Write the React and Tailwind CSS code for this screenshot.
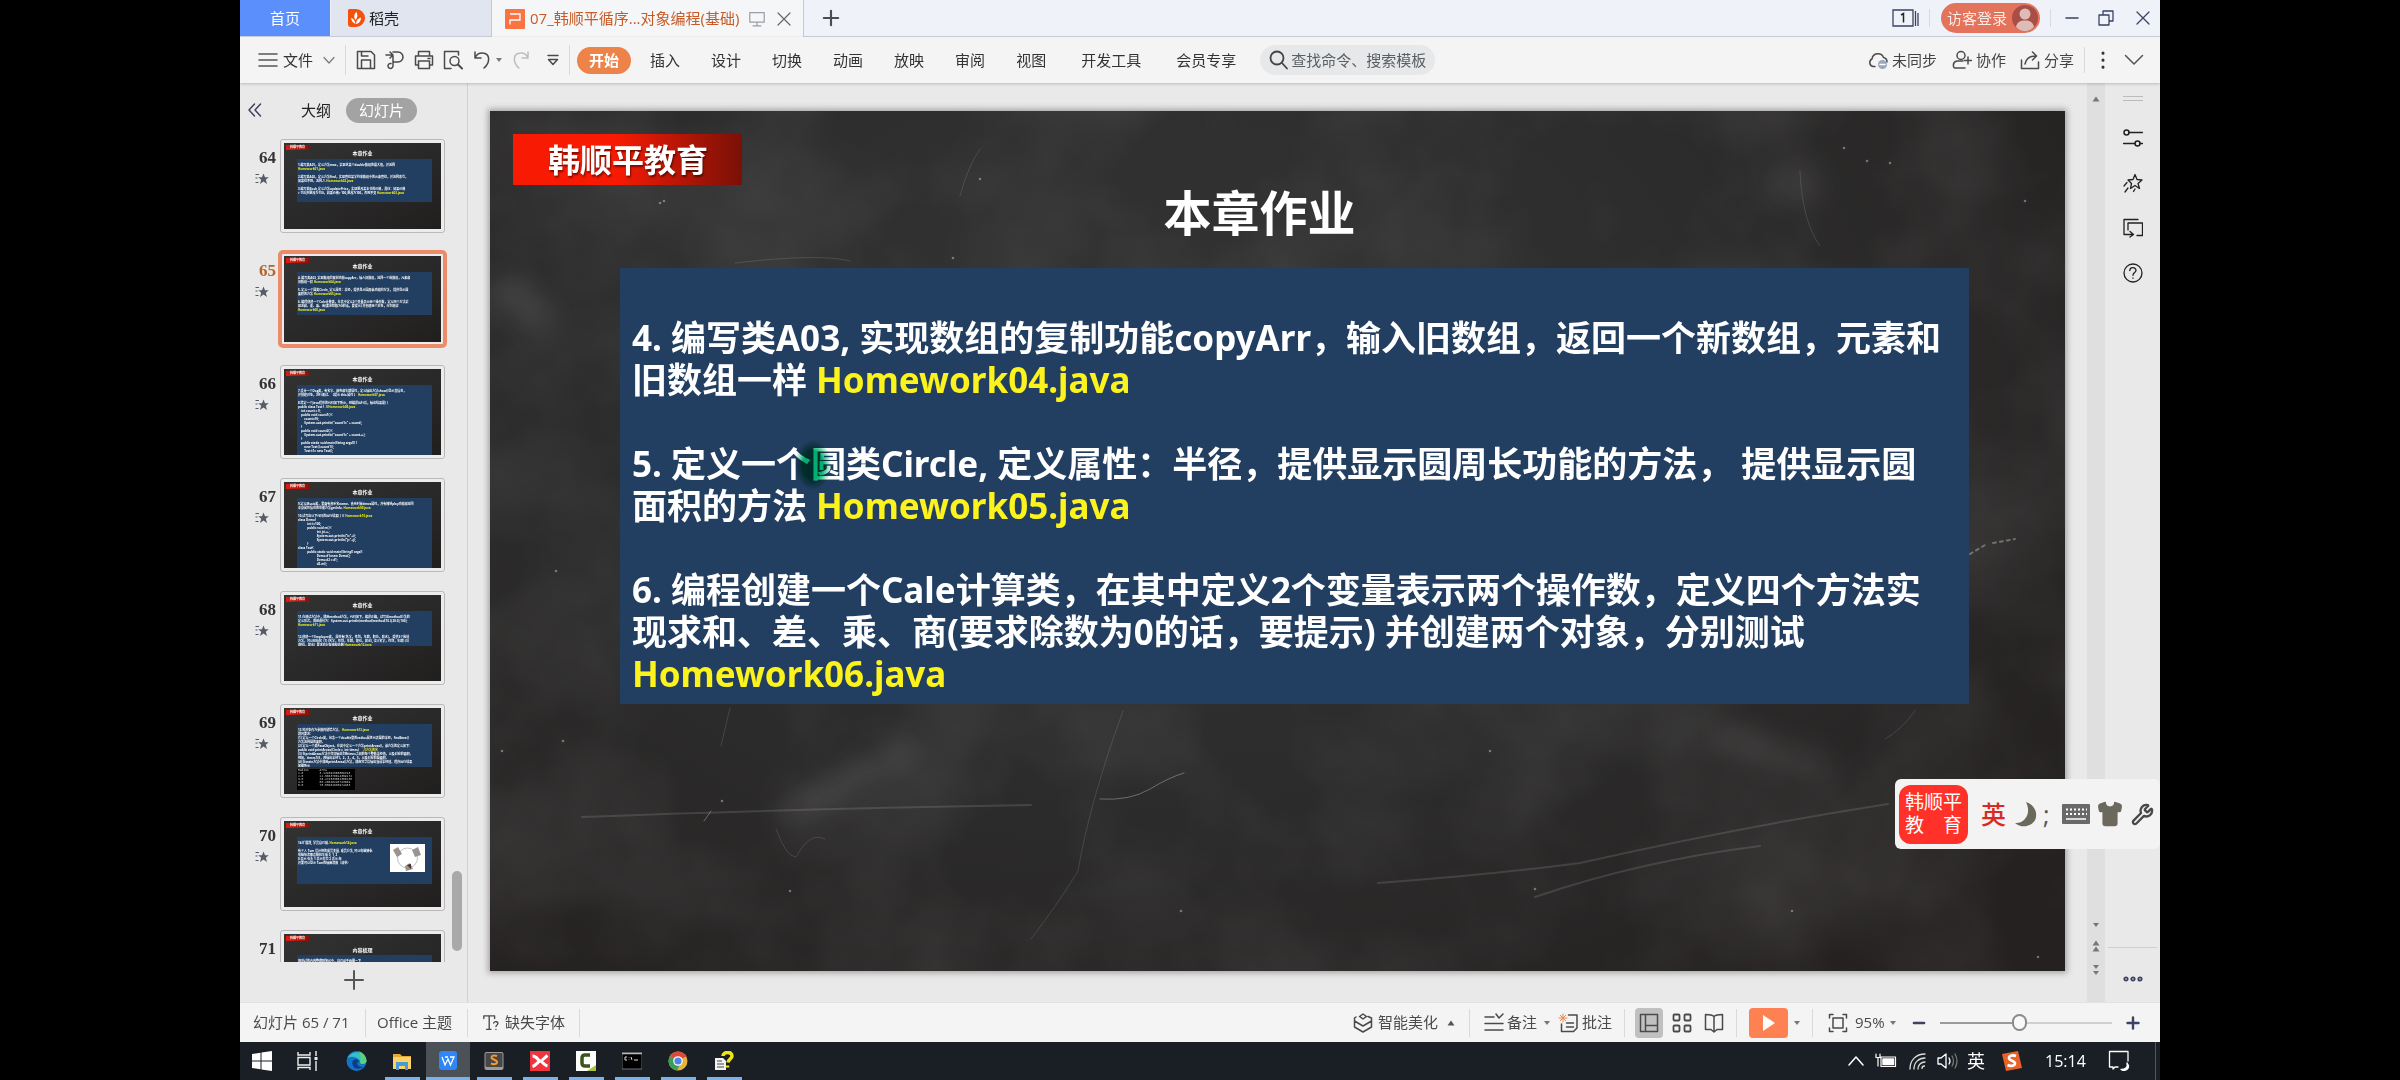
import React from "react";
import { Wrench, Shirt } from "lucide-react";

function Ico({ w = 20, h = 20, box = "0 0 20 20", sw = 1.5, className = "text-[#4a4a4a]", children }) {
  return (
    <svg width={w} height={h} viewBox={box} fill="none" stroke="currentColor" strokeWidth={sw} strokeLinecap="round" strokeLinejoin="round" className={"shrink-0 " + className} aria-hidden="true">
      {children}
    </svg>
  );
}

function Caret({ up, className = "text-[#777]" }) {
  return (
    <svg width="8" height="6" viewBox="0 0 8 6" className={"shrink-0 " + className} aria-hidden="true">
      <path d={up ? "M4 0.5L7.5 5.5H0.5Z" : "M4 5L7 1H1Z"} fill="currentColor" />
    </svg>
  );
}

function Sep({ className = "" }) {
  return <span className={"w-px shrink-0 bg-[#dadada] " + className} />;
}

function TitleBar() {
  return (
    <header className="flex h-[37px] shrink-0 items-stretch border-b border-[#ced1de] bg-[#eff3f9] text-[15px]">
      <button className="w-[90px] shrink-0 bg-[#5a8ffc] text-white">首页</button>
      <button className="ml-px flex w-[160px] shrink-0 items-center bg-[#e0e5ef] pl-[16px] text-[#222]">
        <svg width="18" height="20" viewBox="0 0 18 20" aria-hidden="true">
          <path d="M2 1H9A9 9 0 0 1 9 19H4A3 3 0 0 1 1 16V2Z" fill="#f4510b" />
          <path d="M8.500 16C6 15 4.500 13 4 10C6 10.500 8 12 8.500 16ZM8.500 12C6.500 9 7 6 9.500 4C11 7 10.500 10 8.500 12ZM9 16C9 12.500 11 10.500 14 9.500C14 13 12 15.500 9 16Z" fill="#fff" />
        </svg>
        <span className="ml-1">稻壳</span>
      </button>
      <div className="-mb-px flex w-[313px] shrink-0 items-center border-x border-[#c3c8da] bg-[#f5f6f8] pl-[13px] text-[#c75b27]">
        <svg width="20" height="20" viewBox="0 0 20 20" className="shrink-0" aria-hidden="true">
          <rect width="20" height="20" rx="1" fill="#fb7341" />
          <path d="M5 15.500V11H15V5H5" fill="none" stroke="#fff" strokeWidth="1.300" />
        </svg>
        <span className="ml-[5px] whitespace-nowrap">07_韩顺平循序...对象编程(基础)</span>
        <Ico w={16} h={16} className="ml-auto text-[#9a9da5]">
          <path d="M1 2H19V14H1ZM10 14V18M5 18.500H15" />
        </Ico>
        <button aria-label="关闭标签" className="mr-[12px] ml-[12px]">
          <Ico w={14} h={14} box="0 0 14 14" sw={1.2} className="text-[#666]"><path d="M1 1L13 13M13 1L1 13" /></Ico>
        </button>
      </div>
      <button aria-label="新建标签" className="ml-[18px]">
        <Ico w={18} h={18} sw={2.4} className="text-[#4a4d55]"><path d="M10 2V18M2 10H18" /></Ico>
      </button>
      <div className="ml-auto flex items-center pr-[10px] text-[#3b4263]">
        <svg width="27" height="18" viewBox="0 0 27 18" className="mr-[10px]" fill="none" stroke="#3b4263" strokeWidth="1.300" aria-hidden="true">
          <path d="M1 1H21V17H1Z M23.500 2V17M26 4V17" />
          <path d="M9 6L11.500 4.500V13.500" stroke="#222" strokeWidth="1.500" />
        </svg>
        <Sep className="h-[18px]" />
        <button className="ml-[11px] flex h-[30px] items-center gap-[5px] rounded-full bg-[#e3735a] pr-[2px] pl-[6px] text-[#fbeae6]">
          访客登录
          <svg width="26" height="26" viewBox="0 0 26 26" aria-hidden="true">
            <circle cx="13" cy="13" r="13" fill="#a84e46" />
            <circle cx="13" cy="9" r="5.500" fill="#ddbcb7" />
            <path d="M4 22C5 17 8 15.500 13 15.500S21 17 22 22C17 27.500 9 27.500 4 22Z" fill="#ddbcb7" />
          </svg>
        </button>
        <Sep className="ml-[10px] h-[18px]" />
        <button aria-label="最小化" className="ml-[14px]"><Ico w={14} h={14} box="0 0 14 14" className="text-[#3b4263]"><path d="M1 7H13" /></Ico></button>
        <button aria-label="还原" className="ml-[19px]"><Ico w={16} h={16} box="0 0 16 16" sw={1.3} className="text-[#3b4263]"><path d="M1 5H11V15H1ZM5 5V1H15V11H11" /></Ico></button>
        <button aria-label="关闭" className="ml-[22px]"><Ico w={14} h={14} box="0 0 14 14" sw={1.3} className="text-[#3b4263]"><path d="M1 1L13 13M13 1L1 13" /></Ico></button>
      </div>
    </header>
  );
}

function Ribbon() {
  return (
    <nav className="relative z-10 flex h-[46px] shrink-0 items-center bg-[#f4f4f4] pl-[18px] text-[15px] whitespace-nowrap text-[#333] shadow-[0_1px_3px_rgba(0,0,0,0.2)]">
      <button className="flex items-center">
        <Ico className="text-[#555]"><path d="M1 4H19M1 10H19M1 16H19" /></Ico>
        <span className="ml-[5px]">文件</span>
        <Ico w={12} h={12} box="0 0 12 12" sw={1.2} className="ml-[10px] text-[#777]"><path d="M1 3.500L6 9L11 3.500" /></Ico>
      </button>
      <Sep className="ml-[10px] h-[30px]" />
      <div className="ml-[10px] flex items-center gap-[9px]">
        <button aria-label="保存"><Ico><path d="M1.500 1.500H15L18.500 5V18.500H1.500ZM5.500 18V10H14.500V18M5.500 2V6H12" /></Ico></button>
        <button aria-label="输出为PDF"><Ico><path d="M1 5H8M5 2L8 5L5 8M8 2H13A5 5 0 0 1 13 12H8V16A2.500 2.500 0 1 1 6 13.500M8 12V6" /></Ico></button>
        <button aria-label="打印"><Ico><path d="M4.500 6V1.500H15.500V6M4.500 15H1.500V6H18.500V15H15.500M4.500 11H15.500V18.500H4.500ZM14 8.500H16" /></Ico></button>
        <button aria-label="打印预览"><Ico><path d="M8 18.500H1.500V1.500H15.500V5" /><circle cx="11.500" cy="11" r="4.500" /><path d="M15 14.500L19 18.500" strokeWidth="2" /></Ico></button>
        <button aria-label="撤销"><Ico><path d="M3 2V8H9M3 8C5 3.500 9 2.500 13 3.500C18 5.500 18 13 12 18" /></Ico></button>
      </div>
      <button aria-label="撤销列表" className="ml-[3px]"><Caret /></button>
      <button aria-label="恢复" className="ml-[8px]"><Ico className="text-[#bdbdbd]"><path d="M17 2V8H11M17 8C15 3.500 11 2.500 7 3.500C2 5.500 2 13 8 18" /></Ico></button>
      <button aria-label="自定义" className="ml-[15px]"><Ico w={14} h={12} box="0 0 14 12"><path d="M2 1.500H12M2.500 5.500H11.500L7 10.500Z" /></Ico></button>
      <Sep className="ml-[9px] h-[30px]" />
      <button className="ml-[7px] h-[27px] rounded-full bg-[#ed8348] px-3 font-bold text-white">开始</button>
      <div className="ml-[19px] flex gap-[31px]">
        {["插入", "设计", "切换", "动画", "放映", "审阅", "视图"].map((t) => <button key={t}>{t}</button>)}
      </div>
      <div className="ml-[35px] flex gap-[35px]">
        {["开发工具", "会员专享"].map((t) => <button key={t}>{t}</button>)}
      </div>
      <label className="ml-6 flex h-[30px] w-[175px] items-center gap-[2px] rounded-full bg-[#e6e8ea] pl-[9px]">
        <Ico sw={1.8} className="text-[#444]"><circle cx="8" cy="8" r="6.500" /><path d="M13 13L18 18.500" /></Ico>
        <input aria-label="查找命令、搜索模板" placeholder="查找命令、搜索模板" className="w-[140px] bg-transparent outline-none placeholder:text-[#5a5f63] placeholder:opacity-100" />
      </label>
      <div className="ml-auto flex items-center pr-[16px] text-[#444]">
        <button className="flex items-center gap-[4px]">
          <Ico><path d="M7 16.500H5A4 4 0 0 1 4 9A6 6 0 0 1 15.500 7.500A4.500 4.500 0 0 1 19 12" /><circle cx="14.500" cy="14.500" r="4.500" fill="#9aa8bb" stroke="none" /><path d="M12 14.500H17" stroke="#fff" /></Ico>
          未同步
        </button>
        <button className="ml-[15px] flex items-center gap-[4px]">
          <Ico><circle cx="9" cy="5.500" r="4" /><path d="M11 11H5C0 12 1 18 3 18H13M16 7V14M12.500 10.500H19.500" /></Ico>
          协作
        </button>
        <button className="ml-[14px] flex items-center gap-[4px]">
          <Ico><path d="M1.500 10V18.500H18.500V12M5 14C6 9 9 6 16 6M12.500 2L16.500 6L12.500 10" /></Ico>
          分享
        </button>
        <Sep className="ml-[10px] h-[26px]" />
        <button aria-label="更多" className="ml-[14px]"><Ico w={8} h={18} box="0 0 8 18" className="text-[#333]"><path d="M4 2V2.200M4 9V9.200M4 16V16.200" strokeWidth="3" /></Ico></button>
        <button aria-label="折叠功能区" className="ml-[17px]"><Ico w={20} h={12} box="0 0 20 12" className="text-[#555]"><path d="M1.500 1.500L10 10L18.500 1.500" /></Ico></button>
      </div>
    </nav>
  );
}

const HW = (n) => ({ y: `Homework${n}.java` });

const thumbs = [
  { n: 64, lines: [
    ["1.编写类A01，定义方法max，实现求某个double数组的最大值，并返回"], [HW("01")], [],
    ["2.编写类A02，定义方法find，实现查找某字符串数组中的元素查找，并返回索引，"], ["如果找不到，返回-1. ", HW("02")], [],
    ["3.编写类Book,定义方法updatePrice，实现更改某本书的价格，具体：如果价格"], ["> 150,则更改为150，如果价格> 100,更改为100，否则不变 ", HW("03")]], h: "h-[43px]" },
  { n: 65, selected: true, h: "h-[43px]", lines: [
    ["4. 编写类A03, 实现数组的复制功能copyArr，输入旧数组，返回一个新数组，元素和"], ["旧数组一样 ", HW("04")], [],
    ["5. 定义一个圆类Circle, 定义属性：半径，提供显示圆周长功能的方法， 提供显示圆"], ["面积的方法 ", HW("05")], [],
    ["6. 编程创建一个Cale计算类，在其中定义2个变量表示两个操作数，定义四个方法实"], ["现求和、差、乘、商(要求除数为0的话，要提示) 并创建两个对象，分别测试"], [HW("06")]] },
  { n: 66, h: "flex-1", lines: [
    ["7.设计一个Dog类，有名字、颜色和年龄属性，定义输出方法show()显示其信息，"], ["并创建对象，进行测试、【提示 this.属性 】 ", HW("07")], [],
    ["8.给定一个Java程序的代码如下所示，则编译运行后，输出结果是( )"], ["public class Test {  //", HW("08")],
    ["    int count = 9;"], ["    public void count1() {"], ["        count=10;"], ["        System.out.println(\"count1=\" + count);"], ["    }"],
    ["    public void count2() {"], ["        System.out.println(\"count1=\" + count++);"], ["    }"], ["    public static void main(String args[]) {"], ["        new Test().count1();"], ["        Test t1= new Test();"]] },
  { n: 67, h: "flex-1", lines: [
    ["9.定义Music类，里面有音乐名name、音乐时长times属性，并有播放play功能和返回"], ["本身属性信息的功能方法getInfo. ", HW("09")], [],
    ["10.试写出以下代码的运行结果( ) // ", HW("10")], ["class Demo{"], ["            int i=100;"], ["            public void m() {"], ["                        int j=i++;"],
    ["                        System.out.println(\"i=\"+i);"], ["                        System.out.println(\"j=\"+j);"], ["            }"], ["class Test{"],
    ["            public static void main(String[] args){"], ["                        Demo d1=new Demo();"], ["                        Demo d2 = d1;"], ["                        d2.m();"]] },
  { n: 68, h: "h-[35px]", lines: [
    ["11.在测试方法中，调用method方法，代码如下，编译正确，试写出method方法的"], ["定义形式，调用语句为：System.out.println(method(method(10.0,20.0),100);"], [HW("11")], [], [],
    ["12.创建一个Employee类， 属性有(名字，性别，年龄，职位，薪水)， 提供3个构造"], ["方法，可以初始化  (1) (名字，性别，年龄，职位，薪水), (2) (名字，性别，年龄) (3)"], ["(职位，薪水), 要求充分复用构造器 ", HW("12")]] },
  { n: 69, h: "h-[43px]", table: true, lines: [
    ["13.将对象作为参数传递给方法。 ", HW("13")], ["题目要求："], ["(1) 定义一个Circle类，包含一个double型的radius属性代表圆的半径，findArea()"], ["方法返回圆的面积。"],
    ["(2) 定义一个类PassObject，在类中定义一个方法printAreas()，该方法的定义如下："], ["public void printAreas(Circle c, int times)      ", { y: "//方法签名" }],
    ["(3) 在printAreas方法中打印输出1到times之间的每个整数半径值，以及对应的面积。"], ["例如，times为5，则输出半径1，2，3，4，5，以及对应的圆面积。"],
    ["(4) 在main方法中调用printAreas()方法，调用完毕后输出当前半径值。程序运行结果"], ["如图所示"]] },
  { n: 70, h: "h-[47px]", picture: true, lines: [
    ["14.扩展题, 学员自己做. ", HW("14")], [], ["有个人 Tom 设计他的成员变量. 成员方法, 可以电脑猜拳."], ["电脑每次都会随机生成 0, 1, 2"], ["0 表示 石头 1 表示剪刀 2 表示 布"], ["并要可以显示 Tom的输赢次数（清单）"]] },
  { n: 71, h: "flex-1", title: "内容梳理", lines: [["把讲过的内容整理到笔记中，自己动手画图一下"]] },
];

function Thumb({ t }) {
  return (
    <li className="mb-[19px] flex h-[94px] shrink-0">
      <div className="w-[40px] shrink-0 pt-[9px] pr-[4px] text-right">
        <div className={"font-['Liberation_Serif',serif] text-[17px] leading-[20px] font-bold " + (t.selected ? "text-[#b5642b]" : "text-[#333]")}>{t.n}</div>
        <svg width="14" height="12" viewBox="0 0 14 12" className="mt-[5px] ml-[15px]" aria-hidden="true">
          <path d="M8.500 0.500L10 4.300H13.800L10.800 6.800L12 11L8.500 8.500L5 11L6.200 6.800L3.200 4.300H7Z" fill="#555c68" />
          <path d="M0.500 1.500H4M0.500 5H2.500M0.500 9.500H3.500" stroke="#555c68" strokeWidth="1.200" />
        </svg>
      </div>
      <button aria-label={"幻灯片 " + t.n} className={"h-[94px] w-[165px] shrink-0 rounded-[3px] bg-[#ececec] " + (t.selected ? "border-2 border-[#ec8b69] p-[2px] ring-2 ring-[#ec8b69]" : "border border-[#b9b9b9] p-[3px]")}>
        <div className="flex h-[86px] flex-col overflow-hidden bg-linear-to-br from-[#343334] via-[#2a2929] to-[#211f1e] text-left font-bold text-white">
          <div className="mt-[2px] ml-[2px] h-[5px] w-[23px] shrink-0 bg-linear-to-r from-[#e31b0e] to-[#8d1008] text-center text-[3px] leading-[5px]">韩顺平教育</div>
          <div className={"shrink-0 text-center text-[5px] " + (t.title ? "h-[14px] leading-[18px]" : "h-[9px] leading-[7px]")}>{t.title || "本章作业"}</div>
          <div className={"mr-[9px] ml-[13px] flex shrink-0 justify-between overflow-hidden bg-[#223e61] px-px pt-[4px] " + t.h}>
            <div className="text-[3px] leading-[4px] whitespace-pre">
              {t.lines.map((l, i) => (
                <div key={i} className="h-[4px]">
                  {l.map((s, j) => (typeof s === "string" ? <span key={j}>{s}</span> : <span key={j} className="text-[#f4f01c]">{s.y}</span>))}
                </div>
              ))}
            </div>
            {t.picture && (
              <svg width="35" height="28" viewBox="0 0 35 28" className="mt-[3px] mr-[6px]" aria-hidden="true">
                <rect width="35" height="28" fill="#fff" />
                <circle cx="17.500" cy="14" r="10" fill="none" stroke="#8a9aa0" strokeWidth="0.600" />
                <path d="M3 6L8 3L12 10L7 13ZM22 6L28 3L31 11L25 13ZM15 22L20 19L23 25L16 27Z" fill="#9a9490" />
                <path d="M17 21L21 20L21 25Z" fill="#4c2f25" />
              </svg>
            )}
          </div>
          {t.table && (
            <div className="mt-[2px] ml-[13px] h-[21px] w-[58px] shrink-0 bg-black px-px font-mono text-[3px] leading-[3px] font-normal whitespace-pre text-[#ccc]">
              {["Radius      Area", "1.0         3.141592653589793", "2.0         12.566370614359172", "3.0         28.274333882308138", "4.0         50.26548245743669", "5.0         78.53981633974483"].map((r) => <div key={r}>{r}</div>)}
            </div>
          )}
        </div>
      </button>
    </li>
  );
}

function SlidePanel() {
  return (
    <aside className="flex w-[228px] shrink-0 flex-col border-r border-[#d2d2d2] bg-[#e9e9e9] text-[15px]">
      <div className="flex h-[47px] shrink-0 items-center pt-[7px] pl-[8px]">
        <button aria-label="收起"><Ico w={14} h={14} box="0 0 14 14" className="text-[#3b4263]"><path d="M6.500 1L1 7L6.500 13M12.500 1L7 7L12.500 13" /></Ico></button>
        <button className="ml-[39px] text-[#222]">大纲</button>
        <button className="ml-[15px] h-[25px] rounded-full bg-[#a3a3a3] px-[13px] text-white">幻灯片</button>
      </div>
      <div className="flex min-h-0 flex-1 overflow-hidden">
        <ul className="flex min-h-0 flex-1 flex-col pt-[9px]">
          {thumbs.map((t) => <Thumb key={t.n} t={t} />)}
        </ul>
        <div className="mr-[5px] mb-[11px] h-[80px] w-[10px] self-end rounded-full bg-[#a9a9a9]" />
      </div>
      <button aria-label="新建幻灯片" className="flex h-[40px] shrink-0 items-start justify-center pt-[8px]">
        <Ico sw={2} className="text-[#555]"><path d="M10 1V19M1 10H19" /></Ico>
      </button>
    </aside>
  );
}

function Chalk() {
  return (
    <svg className="absolute inset-0 h-full w-full" viewBox="0 0 1575 860" preserveAspectRatio="none" fill="none" stroke="#fff" strokeLinecap="round" aria-hidden="true">
      <filter id="dust" x="0" y="0" width="100%" height="100%">
        <feTurbulence type="fractalNoise" baseFrequency="0.006 0.006" numOctaves="4" seed="8" />
        <feColorMatrix values="0 0 0 0 1  0 0 0 0 1  0 0 0 0 1  0.160 0 0 0 -0.060" />
      </filter>
      <filter id="smudge" x="-50%" y="-50%" width="200%" height="200%">
        <feGaussianBlur stdDeviation="12" />
      </filter>
      <rect width="1575" height="860" filter="url(#dust)" stroke="none" />
      <g filter="url(#smudge)" strokeOpacity="0.080" strokeWidth="26">
        <path d="M1230 625L1330 655M1290 70Q1330 100 1310 60M300 700L420 640M20 180L50 210" />
      </g>
      <g strokeOpacity="0.120">
        <path d="M470 85Q478 55 490 38" />
        <path d="M245 152Q330 142 360 150" />
        <path d="M240 597L231 635M1425 600Q1410 620 1395 628" />
        <path d="M92 706Q300 698 541 694" strokeWidth="2" />
        <path d="M633 600Q600 690 588 760Q570 790 541 828" />
        <path d="M888 772Q1000 764 1090 752Q1250 716 1398 693M1045 786Q1150 750 1270 735" strokeWidth="2" />
        <path d="M1310 60Q1312 110 1330 135M286 718Q296 746 306 746Q320 720 335 728" />
      </g>
      <g strokeOpacity="0.300">
        <path d="M610 688Q640 690 660 678T694 662" />
        <path d="M1480 443L1495 434M1503 432L1525 428" strokeDasharray="3 4" strokeWidth="2" />
        <path d="M214 710L221 700" />
      </g>
      <g fill="#fff" fillOpacity="0.350" stroke="none">
        {[[170, 92], [174, 90], [463, 147], [490, 68], [66, 460], [1400, 52], [1377, 50], [1354, 37], [1535, 90], [232, 690], [691, 800], [1230, 582], [1302, 800], [1000, 640], [1045, 778], [1548, 846], [12, 640], [300, 780], [73, 630]].map(([x, y]) => (
          <circle key={x} cx={x} cy={y} r="1.300" />
        ))}
      </g>
    </svg>
  );
}

function Yellow({ children }) {
  return <span className="text-[#fbf31b]">{children}</span>;
}

function Slide() {
  return (
    <section className="relative flex min-w-0 flex-1 flex-col overflow-hidden bg-[radial-gradient(ellipse_70%_90%_at_42%_30%,#353435,#2c2b2b_60%,#242120)] font-bold text-white shadow-[0_0_6px_2px_rgba(0,0,0,0.3)]">
      <Chalk />
      <div className="relative mt-[23px] ml-[23px] flex h-[51px] w-[229px] shrink-0 items-center bg-linear-to-r from-[#f91a03] from-45% to-[#7a1006] pl-[35px] text-[32px] [text-shadow:1px_2px_2px_rgba(0,0,0,0.5)]">韩顺平教育</div>
      <h1 className="relative pr-9 text-center text-[48px] leading-[56px]">本章作业</h1>
      <div className="relative mt-[27px] mr-[6.100%] ml-[8.250%] bg-[#223e61] pt-[49px] pb-[9px] pl-[12px] font-['Noto_Sans','Noto_Sans_CJK_SC',sans-serif] text-[35px] leading-[42px] whitespace-nowrap">
        <p>4. 编写类A03, 实现数组的复制功能copyArr，输入旧数组，返回一个新数组，元素和<br />旧数组一样 <Yellow>Homework04.java</Yellow></p>
        <p className="mt-[42px]">5. 定义一个<span className="relative"><span className="absolute top-0 -left-[16px] h-[50px] w-[36px] rounded-full bg-[radial-gradient(#00b070_40%,#ffffff_72%)] mix-blend-multiply" /></span>圆类Circle, 定义属性：半径，提供显示圆周长功能的方法， 提供显示圆<br />面积的方法 <Yellow>Homework05.java</Yellow></p>
        <p className="mt-[42px]">6. 编程创建一个Cale计算类，在其中定义2个变量表示两个操作数，定义四个方法实<br />现求和、差、乘、商(要求除数为0的话，要提示) 并创建两个对象，分别测试<br /><Yellow>Homework06.java</Yellow></p>
      </div>
    </section>
  );
}

function ScrollTrack() {
  return (
    <div className="flex w-[18px] shrink-0 flex-col items-center bg-[#dfdfdf] pt-[13px] text-[#777]">
      <button aria-label="向上滚动"><Caret up /></button>
      <button aria-label="向下滚动" className="mt-auto mb-[12px]"><Caret /></button>
      <button aria-label="上一张" className="mb-[12px] flex flex-col"><Caret up /><Caret up /></button>
      <button aria-label="下一张" className="mb-[26px] flex flex-col"><Caret /><Caret /></button>
    </div>
  );
}

function SideTools() {
  return (
    <aside className="flex w-[55px] shrink-0 flex-col items-center bg-[#e9e9e9]">
      <span className="mt-[13px] h-[5px] w-[20px] border-y border-[#bbb]" />
      <div className="mt-[27px] flex flex-col gap-[25px]">
        <button aria-label="属性"><Ico className="text-[#222]"><circle cx="3.500" cy="4.500" r="2.500" /><path d="M6 4.500H19.500M0.500 15.500H12M17 15.500H19.500" /><circle cx="14.500" cy="15.500" r="2.500" /></Ico></button>
        <button aria-label="动画"><Ico sw={1.3} className="text-[#222]"><path d="M12 1.500L14 6.500L19 7L15 10.500L16.500 15.500L12 12.500L7.500 15.500L8.500 10.500L5 7L10 6.500ZM4 9.500L1 13M5 15L2 19M12 16L10.500 18.500" /></Ico></button>
        <button aria-label="切换"><Ico sw={1.3} className="text-[#222]"><path d="M15 1.500H1V16.500H10M7 13.500L10.500 16.500L7 19M5 12V5H19.500V17.500H14" /></Ico></button>
        <button aria-label="帮助"><Ico sw={1.3} className="text-[#222]"><circle cx="10" cy="10" r="9" /><path d="M6.800 7.500C7 3.500 13.200 4 13 7.500C12.800 9.500 10 9.800 10 12.300M10 15V15.300" /></Ico></button>
      </div>
      <span className="mt-auto h-px w-[49px] bg-[#cfcfcf]" />
      <button aria-label="更多工具" className="mt-[28px] mb-[20px]">
        <Ico w={20} h={6} box="0 0 20 6" sw={1.8} className="text-[#3b4263]"><circle cx="3" cy="3" r="1.700" /><circle cx="10" cy="3" r="1.700" /><circle cx="17" cy="3" r="1.700" /></Ico>
      </button>
    </aside>
  );
}

function StatusBar() {
  return (
    <footer className="flex h-[40px] shrink-0 items-center border-t border-[#e2e2e2] bg-[#f4f4f4] pl-[13px] text-[15px] whitespace-nowrap text-[#4a4a4a]">
      <span className="w-[112px]">幻灯片 65 / 71</span>
      <Sep className="h-[28px]" />
      <span className="w-[101px] pl-[11px]">Office 主题</span>
      <Sep className="h-[28px]" />
      <button className="flex items-center gap-[5px] px-[14px]">
        <Ico w={18} h={18}><path d="M2 5V2H14V5M8 2V17M5 17H10M13 10C14 7.500 18.500 8.500 17.500 11C17 12.500 15.500 12.500 15.500 14M15.500 17V17.300" /></Ico>
        缺失字体
      </button>
      <Sep className="h-[28px]" />
      <div className="ml-auto flex items-center pr-[20px]">
        <button className="flex items-center">
          <Ico><path d="M3 4L1.500 5V14L10 19L18.500 14V5L15 3.500M1.500 8L10 13L18.500 8M6.500 3.500L10 1L13.500 3.500L10 6Z" /></Ico>
          <span className="mr-[9px] ml-[5px]">智能美化</span>
          <Caret up className="text-[#555]" />
        </button>
        <Sep className="mx-[14px] h-[28px]" />
        <button className="flex items-center">
          <Ico><path d="M1 4H10M1 10.500H19M1 17H19M12 1L15 5L19 1" /></Ico>
          <span className="mr-[6px] ml-[3px]">备注</span>
          <Caret />
        </button>
        <button className="ml-[7px] flex items-center gap-[3px]">
          <Ico w={21}><path d="M10 2H18.500V15L15 18.500H3V11M8 10H15M8 14H15" /><path d="M4.500 1V9M0.500 5H8.500M1.700 2.200L7.300 7.800M7.300 2.200L1.700 7.800" stroke="#e88a4c" strokeWidth="1" /></Ico>
          批注
        </button>
        <Sep className="mr-[10px] ml-[12px] h-[28px]" />
        <button aria-label="普通视图" className="flex h-[30px] w-[28px] items-center justify-center rounded-[4px] bg-[#c0c0c0]"><Ico><path d="M1.500 1.500H18.500V18.500H1.500ZM6.500 2V18M6.500 12.500H18" /></Ico></button>
        <button aria-label="幻灯片浏览" className="ml-[9px]"><Ico sw={1.8}><rect x="1.500" y="1.500" width="6" height="6" rx="1" /><rect x="12.500" y="1.500" width="6" height="6" rx="1" /><rect x="1.500" y="12.500" width="6" height="6" rx="1" /><rect x="12.500" y="12.500" width="6" height="6" rx="1" /></Ico></button>
        <button aria-label="阅读视图" className="ml-[12px]"><Ico><path d="M10 3.500C8 1.500 5 1.500 1.500 1.500V16.500H7L10 19L13 16.500H18.500V1.500C15 1.500 12 1.500 10 3.500ZM10 4V18" /></Ico></button>
        <Sep className="mx-[12px] h-[28px]" />
        <button aria-label="放映" className="flex h-[30px] w-[39px] items-center justify-center rounded-[4px] bg-[#fd8152]">
          <svg width="12" height="16" viewBox="0 0 12 16" aria-hidden="true"><path d="M0 0L12 8L0 16Z" fill="#fff" /></svg>
        </button>
        <button aria-label="放映选项" className="ml-[5px]"><Caret /></button>
        <Sep className="mr-[15px] ml-[11px] h-[28px]" />
        <Ico><path d="M1.500 5V1.500H5M15 1.500H18.500V5M18.500 15V18.500H15M5 18.500H1.500V15M5 5H15V15H5Z" /></Ico>
        <label className="ml-[7px] flex items-center">
          <select aria-label="显示比例" className="w-[34px] appearance-none bg-transparent outline-none"><option>95%</option></select>
          <Caret />
        </label>
        <button aria-label="缩小" className="ml-[15px]"><Ico w={14} h={14} box="0 0 14 14" sw={2.6} className="text-[#3b4263]"><path d="M2 7H12" /></Ico></button>
        <input type="range" aria-label="缩放" min="0" max="100" defaultValue="46" className="mx-[14px] h-[18px] w-[172px] appearance-none bg-[linear-gradient(90deg,#9a9a9a_46%,#cfcfcf_46%)] bg-size-[100%_2px] bg-center bg-no-repeat [&::-webkit-slider-thumb]:h-[17px] [&::-webkit-slider-thumb]:w-[15px] [&::-webkit-slider-thumb]:appearance-none [&::-webkit-slider-thumb]:rounded-full [&::-webkit-slider-thumb]:border-2 [&::-webkit-slider-thumb]:border-[#8a8a8a] [&::-webkit-slider-thumb]:bg-[#f8f8f8]" />
        <button aria-label="放大"><Ico w={14} h={14} box="0 0 14 14" sw={2.4} className="text-[#3b4263]"><path d="M7 1.500V12.500M1.500 7H12.500" /></Ico></button>
      </div>
    </footer>
  );
}

const apps = [
  { name: "资源管理器", run: true, d: <><path d="M1 3H8L10 5H19V18H1Z" fill="#e9a92f" /><path d="M1 6H19V18H1Z" fill="#fcd36b" /><path d="M4 11H16V19H13V15H7V19H4Z" fill="#4a9bd4" /></> },
  { name: "WPS", run: true, active: true, d: <><rect x="1" width="18" height="19" rx="3" fill="#2f86f6" /><path d="M4 6L7 14L10 8L12.500 14L16 6H12M7 6H10" stroke="#fff" strokeWidth="1.300" fill="none" /></> },
  { name: "Sublime", run: true, d: <><rect x="0.500" y="1" width="19" height="18" rx="2" fill="#9b9b9b" /><rect x="1.500" y="2" width="17" height="14" rx="1" fill="#474747" /><path d="M13 5C10 4 7.500 4.500 7.500 6.500C7.500 9 13 8.500 13 11C13 13.500 9.500 13.500 7 12.500" stroke="#f29b35" strokeWidth="2" fill="none" /></> },
  { name: "XMind", run: true, d: <><rect width="20" height="20" fill="#f0343e" /><path d="M2.500 5C7 5 8 9.500 10 10S14 7 17.500 4.500M2.500 15.500C6 14.500 8 10.500 10 10S13 14 17.500 15" stroke="#fff" strokeWidth="3" fill="none" /></> },
  { name: "Camtasia", run: true, d: <><rect width="20" height="20" fill="#fff" /><path d="M14 4H9Q6 4 6 7V12Q6 15 9 15H14" stroke="#39541d" strokeWidth="3.500" fill="none" /><path d="M20 14V20H11Z" fill="#a9c43c" /></> },
  { name: "命令提示符", run: true, d: <><rect y="2" width="20" height="16" fill="#000" stroke="#888" strokeWidth="0.800" /><path d="M0 2.500H20" stroke="#bbb" strokeWidth="1.500" /><path d="M5 6H3V9H5M7 6.500V7M7 8.500V9M9 6L10 9M12 9H16" stroke="#ddd" fill="none" /></> },
  { name: "Chrome", run: true, d: <><circle cx="10" cy="10" r="9.500" fill="#e3b53a" /><path d="M10 10L1.800 5.200A9.500 9.500 0 0 1 18.200 5.300Z" fill="#d9493c" /><path d="M10 10L1.800 5.200A9.500 9.500 0 0 0 9 19.500L13 11Z" fill="#3c9d57" /><path d="M10 5.500H18.400" stroke="#d9493c" strokeWidth="1" /><circle cx="10" cy="10" r="4.800" fill="#fff" /><circle cx="10" cy="10" r="3.600" fill="#4c86ec" /></> },
  { name: "帮助文档", run: true, d: <><path d="M1 7H9L12 10V19H1Z" fill="#f2f2f2" /><path d="M3 10H8M3 13H10M3 16H10" stroke="#444" /><path d="M9 5C9 0.500 18 0 18 5C18 8 14.500 8 14 11.500M13.500 14.500V16.500" stroke="#efe516" strokeWidth="3.500" fill="none" /></> },
];

function Taskbar() {
  return (
    <footer className="flex h-[38px] shrink-0 items-stretch bg-[#1a1f25] pr-[4px] text-white">
      <button aria-label="开始" className="flex w-[44px] items-center justify-center"><svg width="20" height="20" viewBox="0 0 20 20" fill="#fff" aria-hidden="true"><path d="M0 3L8.500 1.800V9.500H0ZM9.500 1.600L20 0V9.500H9.500ZM0 10.500H8.500V18.200L0 17ZM9.500 10.500H20V20L9.500 18.400Z" /></svg></button>
      <button aria-label="任务视图" className="flex w-[48px] items-center justify-center"><svg width="22" height="20" viewBox="0 0 22 20" fill="none" stroke="#eee" strokeWidth="1.400" aria-hidden="true"><path d="M1 1V4H13V1M1 6.500H13V14H1ZM1 19V16.500H13V19M19 0V5M19 10V20" /><path d="M17.500 7.500H20.500" strokeWidth="3" /></svg></button>
      <button aria-label="Edge" className="flex w-[48px] items-center justify-center">
        <svg width="21" height="20" viewBox="0 0 20 20" aria-hidden="true">
          <circle cx="10" cy="10" r="10" fill="#1373c8" />
          <path d="M1 7A10 10 0 0 1 20 10C19 14 14 13.500 13.500 11.500C14 8 7 3.500 1 7Z" fill="#35c0c5" />
          <path d="M12 0.300A10 10 0 0 1 20 10C19 14 14 13.500 13.500 11.500C15 8 14 3 12 0.300Z" fill="#5bd277" />
          <path d="M13 10C9 6 5 9 6 13.500C7 18 12 19 17 16C13 16.500 10 14 11 11.500C11.500 10.500 12.500 10.500 13 10Z" fill="#0c3f86" />
        </svg>
      </button>
      {apps.map((a) => (
        <button key={a.name} aria-label={a.name} className={"flex w-[46px] flex-col items-center border-r-2 border-transparent bg-clip-padding pt-[9px] " + (a.active ? "bg-[#4a5157]" : "")}>
          <svg width="20" height="20" viewBox="0 0 20 20" aria-hidden="true">{a.d}</svg>
          <span className={"mt-auto h-[3px] bg-[#7ab2ea] " + (a.active ? "w-full" : "w-[35px]")} />
        </button>
      ))}
      <div className="ml-auto flex items-center">
        <Ico w={16} h={12} box="0 0 16 12" className="text-white"><path d="M1 10L8 2L15 10" /></Ico>
        <Ico w={22} h={16} box="0 0 22 16" className="ml-[11px] text-white"><path d="M6 4H20.500V13.500H6ZM1 1V4.500H5V1M3 5V13" strokeWidth="1.200" /><path d="M8 6H18.500V11.500H8Z" fill="#fff" /></Ico>
        <Ico w={17} h={18} box="0 0 17 18" sw={1.3} className="ml-[12px] text-[#ddd]"><path d="M1 17C1 8 7 2 16 2M5 17C5 10 10 6 16 6M9 17C9 13 12 10 16 10M13 16.500Q13 14 15.500 14" /></Ico>
        <Ico w={21} h={16} box="0 0 21 16" sw={1.3} className="ml-[11px] text-white"><path d="M1 5H4L9 1V15L4 11H1Z" /><path d="M12 5Q14 8 12 11" /><path d="M15 3Q18 8 15 13M18 1Q22 8 18 15" stroke="#777" /></Ico>
        <span className="ml-[9px] text-[18px]">英</span>
        <svg width="22" height="20" viewBox="0 0 22 20" className="ml-[16px]" aria-hidden="true"><path d="M1 3L17 0L21 17L5 20Z" fill="#e9622b" /><path d="M15 5C11 3.500 7.500 5 8 7.500C8.500 10 14 9.500 14 12.500C14 15 9.500 15.500 6.500 14" fill="none" stroke="#fff" strokeWidth="2.600" /></svg>
        <span className="ml-[22px] w-[41px] text-[16px]">15:14</span>
        <Ico w={22} h={22} box="0 0 22 22" sw={1.3} className="ml-[22px] text-white"><path d="M10 17H7L5 19V17H1.500V1.500H20V11" /><path d="M19 13C20 17 18 19.500 13 19.500C15.500 21.500 21 20 20.500 15.500Z" fill="#fff" /></Ico>
        <span className="ml-[25px] h-full w-px bg-[#555]" />
      </div>
    </footer>
  );
}

function InputMethodBar() {
  return (
    <div className="absolute right-0 bottom-[231px] z-20 flex h-[70px] w-[265px] items-center rounded-[6px] bg-[#f3f3f3] pl-[4px]">
      <div className="flex h-[59px] w-[69px] flex-col justify-center rounded-[12px] bg-[#ff3128] px-[6px] text-[19px] leading-[23px] text-white">
        <div>韩顺平</div>
        <div className="flex justify-between"><span>教</span><span>育</span></div>
      </div>
      <button className="ml-[13px] text-[25px] leading-[30px] font-medium text-[#d92a22]">英</button>
      <svg width="22" height="25" viewBox="0 0 22 25" className="ml-[9px]" aria-hidden="true"><path d="M11 0C19 3 22 9 21 15C20 23 8 28 0 21C9 22 17 12 11 0Z" fill="#6b695c" /></svg>
      <span className="ml-[6px] text-[25px] leading-[30px] text-[#555]">;</span>
      <svg width="28" height="20" viewBox="0 0 28 20" className="ml-[12px] shrink-0" aria-hidden="true">
        <rect width="28" height="20" rx="1" fill="#696969" />
        <path d="M4 5.500H25M4 10H25" stroke="#fff" strokeWidth="2" strokeDasharray="2 2" />
        <path d="M4 15H24" stroke="#fff" strokeWidth="1.500" />
      </svg>
      <Shirt size={28} fill="#6b695c" color="#6b695c" strokeWidth={1} className="ml-[6px] shrink-0" />
      <Wrench size={23} color="#484848" strokeWidth={2.4} className="ml-[7px] shrink-0" />
    </div>
  );
}

export default function App() {
  return (
    <div className="h-screen bg-black px-[10%] font-['Open_Sans','Noto_Sans_CJK_SC',sans-serif]" lang="zh-CN">
      <div className="relative flex h-full flex-col overflow-hidden">
        <TitleBar />
        <Ribbon />
        <main className="flex min-h-0 flex-1 bg-[#e9e9e9]">
          <SlidePanel />
          <div className="flex min-w-0 flex-1 px-[22px] pt-[28px] pb-[31px]">
            <Slide />
          </div>
          <ScrollTrack />
          <SideTools />
        </main>
        <StatusBar />
        <Taskbar />
        <InputMethodBar />
      </div>
    </div>
  );
}
